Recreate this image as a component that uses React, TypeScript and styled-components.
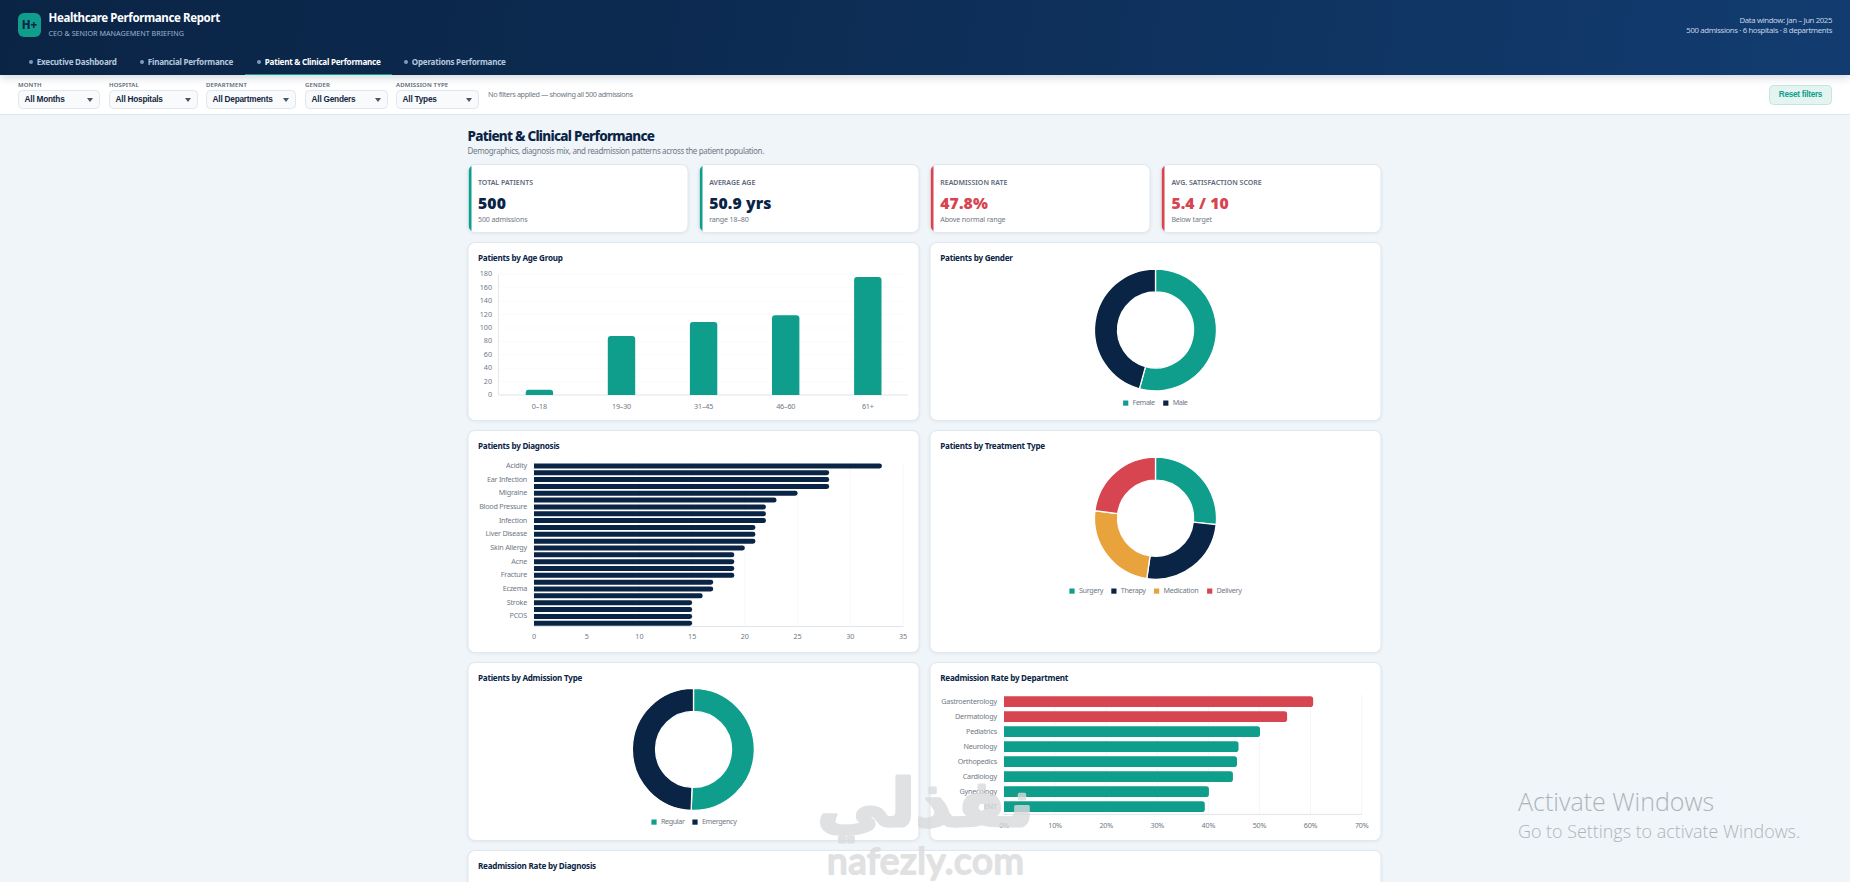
import React from 'react';
import styled, { createGlobalStyle } from 'styled-components';

const TEAL = '#109e8c';
const NAVY = '#0a2445';
const RED = '#d64550';
const AMBER = '#e8a33d';
const MUTED = '#6f7985';

const Global = createGlobalStyle`
  * { box-sizing: border-box; }
  html, body { margin: 0; height: 882px; overflow: hidden; }
  body { background: #f0f5f9; font-family: "Noto Sans", "Open Sans", sans-serif; color: ${NAVY}; }
`;

const Page = styled.div`
  position: relative;
  width: 1850px;
  height: 882px;
  overflow: hidden;
`;

const Header = styled.header`
  position: relative;
  z-index: 2;
  height: 75px;
  display: flex;
  flex-direction: column;
  justify-content: space-between;
  background: linear-gradient(100deg, #0a2445 0%, #0c2a50 35%, #123c70 100%);
  box-shadow: 0 2px 9px rgba(10, 36, 69, 0.2);
`;

const Brand = styled.div`
  display: flex;
  align-items: center;
  padding: 9px 18px 0;
`;

const Logo = styled.div`
  width: 23px;
  height: 24px;
  margin-top: 1px;
  border-radius: 6px;
  background: ${TEAL};
  color: ${NAVY};
  font: 800 11.5px/24px "Noto Sans", sans-serif;
  text-align: center;
`;

const BrandText = styled.div`
  margin-left: 7.5px;
  flex: 1;
`;

const BrandTitle = styled.div`
  color: #fff;
  font-size: 11.5px;
  font-weight: 700;
  line-height: 17px;
  letter-spacing: -0.38px;
`;

const BrandSub = styled.div`
  color: #9db4cf;
  font-size: 7.2px;
  line-height: 14px;
`;

const Window = styled.div`
  color: #c3d2e6;
  font-size: 7.8px;
  line-height: 10px;
  text-align: right;
  letter-spacing: -0.38px;
`;

const Tabs = styled.nav`
  display: flex;
  padding-left: 17px;
`;

const Tab = styled.div<{ $w: number; $on?: boolean }>`
  width: ${p => p.$w}px;
  height: 25px;
  padding: 0 0 1px 12px;
  display: flex;
  align-items: center;
  gap: 3.8px;
  font-size: 8.1px;
  font-weight: 700;
  letter-spacing: -0.25px;
  white-space: nowrap;
  color: ${p => (p.$on ? '#fff' : '#b3c7de')};
  border-bottom: 1.5px solid ${p => (p.$on ? TEAL : 'transparent')};
  &::before {
    content: '';
    width: 4px;
    height: 4px;
    flex: none;
    border-radius: 50%;
    background: #7f9bbb;
  }
`;

const Filters = styled.div`
  height: 40px;
  display: flex;
  align-items: flex-start;
  padding: 5.5px 18px 0;
  background: #fff;
  border-bottom: 1px solid #dde5ed;
`;

const Field = styled.div<{ $w: number; $gap: number }>`
  width: ${p => p.$w}px;
  margin-right: ${p => p.$gap}px;
`;

const FieldLabel = styled.div`
  height: 9.5px;
  font-size: 6px;
  line-height: 8.5px;
  font-weight: 600;
  letter-spacing: 0.15px;
  color: #5b6878;
  white-space: nowrap;
`;

const Select = styled.div`
  height: 19px;
  display: flex;
  align-items: center;
  justify-content: space-between;
  padding: 0 6px 0 5.6px;
  border: 1px solid #dfe6ee;
  border-radius: 4.5px;
  background: #f8fafc;
  font: 700 8.25px "Liberation Sans", sans-serif;
  letter-spacing: -0.22px;
  color: #14263f;
  white-space: nowrap;
  &::after {
    content: '';
    border: 3px solid transparent;
    border-top: 4.5px solid #4a5565;
    border-bottom: 0;
  }
`;

const FilterNote = styled.div`
  flex: 1;
  padding-top: 8px;
  font-size: 7.3px;
  line-height: 11px;
  letter-spacing: -0.4px;
  color: ${MUTED};
`;

const Reset = styled.div`
  width: 63px;
  height: 20px;
  margin-top: 4.5px;
  border: 1px solid #c5e5e0;
  border-radius: 4.5px;
  background: #e3f4f1;
  color: ${TEAL};
  font: 700 8.25px/17px "Liberation Sans", sans-serif;
  letter-spacing: -0.3px;
  text-align: center;
`;

const Main = styled.main`
  width: 914px;
  margin: 0 auto;
  padding-top: 12.8px;
  transform: translateX(-0.5px);
`;

const PageTitle = styled.h1`
  margin: 0;
  font-size: 13.5px;
  font-weight: 800;
  line-height: 16px;
  letter-spacing: -0.75px;
`;

const PageSub = styled.p`
  margin: 0.6px 0 7px;
  font-size: 8px;
  line-height: 13px;
  letter-spacing: -0.35px;
  color: ${MUTED};
`;

const Kpis = styled.div`
  display: grid;
  grid-template-columns: repeat(4, 1fr);
  gap: 10.5px;
  margin-bottom: 9.6px;
`;

const Kpi = styled.div<{ $c: string }>`
  position: relative;
  overflow: hidden;
  height: 68.4px;
  padding: 12.5px 0 0 9.5px;
  border: 1px solid #e0e7ee;
  border-radius: 7.5px;
  background: #fff;
  box-shadow: 0 1px 3px rgba(10, 36, 69, 0.06);
  &::before {
    content: '';
    position: absolute;
    left: 0;
    top: 0;
    bottom: 0;
    width: 2.5px;
    background: ${p => p.$c};
  }
`;

const KpiLabel = styled.div`
  font-size: 7px;
  font-weight: 600;
  line-height: 10px;
  color: #5b6878;
`;

const KpiValue = styled.div<{ $c: string }>`
  margin-top: 4px;
  font-size: 15.75px;
  font-weight: 900;
  line-height: 22px;
  letter-spacing: 0.1px;
  color: ${p => p.$c};
`;

const KpiNote = styled.div`
  font-size: 7.1px;
  line-height: 10px;
  letter-spacing: -0.15px;
  color: ${MUTED};
`;

const Grid = styled.div`
  display: grid;
  grid-template-columns: 1fr 1fr;
  grid-template-rows: 178.3px 222.3px 178.2px 178px;
  gap: 9.7px 10.5px;
`;

const Panel = styled.section<{ $wide?: boolean }>`
  ${p => p.$wide && 'grid-column: 1 / -1;'}
  min-width: 0;
  padding: 7.5px 9.5px 0;
  border: 1px solid #e0e7ee;
  border-radius: 7.5px;
  background: #fff;
  box-shadow: 0 1px 3px rgba(10, 36, 69, 0.06);
`;

const PanelTitle = styled.h2`
  margin: 0;
  height: 15px;
  font-size: 8.1px;
  font-weight: 700;
  line-height: 14.4px;
  letter-spacing: -0.24px;
  white-space: nowrap;
`;

const Chart = styled.svg`
  display: block;
  overflow: visible;
  text {
    font: 7.2px "Noto Sans", sans-serif;
    fill: ${MUTED};
  }
  text.name {
    letter-spacing: -0.22px;
  }
`;

const Overlay = styled.div`
  position: absolute;
  z-index: 5;
  pointer-events: none;
`;

const Activate = styled(Overlay)`
  left: 1518px;
  top: 785px;
  color: #adb4b9;
  font-family: "Open Sans", sans-serif;
  white-space: nowrap;
`;

const ActivateTitle = styled.div`
  font-size: 25px;
  line-height: 32px;
  font-weight: 350;
`;

const ActivateSub = styled.div`
  font-size: 17.9px;
  line-height: 28px;
  font-weight: 350;
`;

const Mark = styled(Overlay)`
  left: 790px;
  top: 750px;
`;

const r2 = (n: number) => Math.round(n * 100) / 100;

const roundedTop = (x: number, y: number, w: number, h: number, r: number) =>
  `M${x} ${y + h}V${y + r}Q${x} ${y} ${x + r} ${y}H${x + w - r}Q${x + w} ${y} ${x + w} ${y + r}V${y + h}Z`;
const roundedRight = (x: number, y: number, w: number, h: number, r: number) =>
  `M${x} ${y}H${x + w - r}Q${x + w} ${y} ${x + w} ${y + r}V${y + h - r}Q${x + w} ${y + h} ${x + w - r} ${y + h}H${x}Z`;

const AgeChart = () => {
  const bars: [string, number][] = [['0–18', 8], ['19–30', 88], ['31–45', 109], ['46–60', 119], ['61+', 176]];
  const base = 129;
  const k = 120.6 / 180;
  return (
    <Chart width={430} height={152}>
      {Array.from({ length: 10 }, (_, i) => i * 20).map(v => (
        <g key={v}>
          <line x1={20} x2={429.5} y1={base - v * k} y2={base - v * k} stroke={v ? '#fafbfd' : '#dfe5eb'} />
          <text x={13.5} y={base - v * k + 1.9} textAnchor="end">{v}</text>
        </g>
      ))}
      <line x1={20} x2={20} y1={8.4} y2={base} stroke="#e3e8ee" />
      {bars.map(([name, v], i) => {
        const cx = 60.9 + i * 82.1;
        return (
          <g key={name}>
            <path d={roundedTop(cx - 13.7, base - v * k, 27.4, v * k, 3)} fill={TEAL} />
            <text className="name" x={cx} y={142.9} textAnchor="middle">{name}</text>
          </g>
        );
      })}
    </Chart>
  );
};

type Slice = { name: string; color: string; to: number; x: number; w: number };

const Donut = ({ cy, slices, legendY }: { cy: number; slices: Slice[]; legendY: number }) => {
  const cx = 215;
  const R = 61;
  const r = 38;
  const at = (deg: number, rad: number) => {
    const a = (deg * Math.PI) / 180;
    return `${r2(cx + rad * Math.sin(a))} ${r2(cy - rad * Math.cos(a))}`;
  };
  return (
    <Chart width={430} height={152}>
      {slices.map((s, i) => {
        const from = i ? slices[i - 1].to : 0;
        const big = s.to - from > 180 ? 1 : 0;
        return (
          <g key={s.name}>
            <path
              d={`M${at(from, R)}A${R} ${R} 0 ${big} 1 ${at(s.to, R)}L${at(s.to, r)}A${r} ${r} 0 ${big} 0 ${at(from, r)}Z`}
              fill={s.color}
              stroke="#fff"
              strokeWidth={1.3}
            />
            <rect x={s.x} y={legendY - 2.5} width={5.2} height={5.2} fill={s.color} />
            <text x={s.x + 9.5} y={legendY + 2.1} textLength={s.w}>{s.name}</text>
          </g>
        );
      })}
    </Chart>
  );
};

const DiagnosisChart = () => {
  const values = [33, 28, 28, 28, 25, 23, 22, 22, 22, 21, 21, 21, 20, 19, 19, 19, 19, 17, 17, 16, 15, 15, 15, 15];
  const names = ['Acidity', 'Ear Infection', 'Migraine', 'Blood Pressure', 'Infection', 'Liver Disease', 'Skin Allergy', 'Acne', 'Fracture', 'Eczema', 'Stroke', 'PCOS'];
  const x0 = 55.5;
  const k = 369 / 35;
  return (
    <Chart width={430} height={196}>
      {[0, 5, 10, 15, 20, 25, 30, 35].map(v => (
        <g key={v}>
          <line x1={x0 + v * k} x2={x0 + v * k} y1={8.5} y2={172.6} stroke="#f7f8fa" />
          <text x={x0 + v * k} y={184.6} textAnchor="middle">{v}</text>
        </g>
      ))}
      <line x1={x0} x2={x0 + 369.5} y1={172.6} y2={172.6} stroke="#dfe5eb" />
      {values.map((v, i) => (
        <path key={i} d={roundedRight(x0, r2(9.4 + i * 6.84), v * k, 5, 2.4)} fill={NAVY} />
      ))}
      {names.map((n, i) => (
        <text className="name" key={n} x={48.5} y={14 + i * 13.65} textAnchor="end">{n}</text>
      ))}
    </Chart>
  );
};

const DepartmentChart = () => {
  const rows: [string, number][] = [
    ['Gastroenterology', 60.5], ['Dermatology', 55.4], ['Pediatrics', 50.1], ['Neurology', 45.9],
    ['Orthopedics', 45.6], ['Cardiology', 44.8], ['Gynecology', 40.1], ['ENT', 39.3],
  ];
  const x0 = 63.5;
  const k = 357.7 / 70;
  return (
    <Chart width={430} height={152}>
      {[0, 10, 20, 30, 40, 50, 60, 70].map(v => (
        <g key={v}>
          <line x1={x0 + v * k} x2={x0 + v * k} y1={8.5} y2={128.4} stroke="#f4f6f9" />
          <text className="name" x={x0 + v * k} y={141.8} textAnchor="middle">{v}%</text>
        </g>
      ))}
      <line x1={x0} x2={x0 + 358} y1={128.4} y2={128.4} stroke="#dfe5eb" />
      {rows.map(([n, v], i) => (
        <g key={n}>
          <path d={roundedRight(x0, 10.3 + i * 15, v * k, 10.7, 2.8)} fill={i < 2 ? RED : TEAL} />
          <text className="name" x={56.4} y={17.8 + i * 15} textAnchor="end">{n}</text>
        </g>
      ))}
    </Chart>
  );
};

const tabs: { name: string; w: number; on?: boolean }[] = [
  { name: 'Executive Dashboard', w: 111 },
  { name: 'Financial Performance', w: 117 },
  { name: 'Patient & Clinical Performance', w: 147, on: true },
  { name: 'Operations Performance', w: 126 },
];

const fields = [
  { label: 'MONTH', value: 'All Months', w: 82, gap: 9 },
  { label: 'HOSPITAL', value: 'All Hospitals', w: 89, gap: 8 },
  { label: 'DEPARTMENT', value: 'All Departments', w: 90, gap: 9 },
  { label: 'GENDER', value: 'All Genders', w: 83, gap: 8 },
  { label: 'ADMISSION TYPE', value: 'All Types', w: 83, gap: 9 },
];

const kpis = [
  { label: 'TOTAL PATIENTS', value: '500', note: '500 admissions', bad: false },
  { label: 'AVERAGE AGE', value: '50.9 yrs', note: 'range 18–80', bad: false },
  { label: 'READMISSION RATE', value: '47.8%', note: 'Above normal range', bad: true },
  { label: 'AVG. SATISFACTION SCORE', value: '5.4 / 10', note: 'Below target', bad: true },
];

export default function App() {
  return (
    <Page>
      <Global />
      <Header>
        <Brand>
          <Logo>H+</Logo>
          <BrandText>
            <BrandTitle>Healthcare Performance Report</BrandTitle>
            <BrandSub>CEO &amp; SENIOR MANAGEMENT BRIEFING</BrandSub>
          </BrandText>
          <Window>
            <div>Data window: Jan – Jun 2025</div>
            <div>500 admissions · 6 hospitals · 8 departments</div>
          </Window>
        </Brand>
        <Tabs>
          {tabs.map(t => (
            <Tab key={t.name} $w={t.w} $on={t.on}>{t.name}</Tab>
          ))}
        </Tabs>
      </Header>
      <Filters>
        {fields.map(f => (
          <Field key={f.label} $w={f.w} $gap={f.gap}>
            <FieldLabel>{f.label}</FieldLabel>
            <Select>{f.value}</Select>
          </Field>
        ))}
        <FilterNote>No filters applied — showing all 500 admissions</FilterNote>
        <Reset>Reset filters</Reset>
      </Filters>
      <Main>
        <PageTitle>Patient &amp; Clinical Performance</PageTitle>
        <PageSub>Demographics, diagnosis mix, and readmission patterns across the patient population.</PageSub>
        <Kpis>
          {kpis.map(k => (
            <Kpi key={k.label} $c={k.bad ? RED : TEAL}>
              <KpiLabel>{k.label}</KpiLabel>
              <KpiValue $c={k.bad ? RED : NAVY}>{k.value}</KpiValue>
              <KpiNote>{k.note}</KpiNote>
            </Kpi>
          ))}
        </Kpis>
        <Grid>
          <Panel>
            <PanelTitle>Patients by Age Group</PanelTitle>
            <AgeChart />
          </Panel>
          <Panel>
            <PanelTitle>Patients by Gender</PanelTitle>
            <Donut
              cy={64}
              legendY={137}
              slices={[
                { name: 'Female', color: TEAL, to: 195.3, x: 182.6, w: 22.5 },
                { name: 'Male', color: NAVY, to: 360, x: 222.7, w: 15.2 },
              ]}
            />
          </Panel>
          <Panel>
            <PanelTitle>Patients by Diagnosis</PanelTitle>
            <DiagnosisChart />
          </Panel>
          <Panel>
            <PanelTitle>Patients by Treatment Type</PanelTitle>
            <Donut
              cy={64.2}
              legendY={137}
              slices={[
                { name: 'Surgery', color: TEAL, to: 96, x: 128.9, w: 24.6 },
                { name: 'Therapy', color: NAVY, to: 188.2, x: 170.8, w: 25.2 },
                { name: 'Medication', color: AMBER, to: 277, x: 213.5, w: 35.2 },
                { name: 'Delivery', color: RED, to: 360, x: 266.6, w: 25.2 },
              ]}
            />
          </Panel>
          <Panel>
            <PanelTitle>Patients by Admission Type</PanelTitle>
            <Donut
              cy={63.4}
              legendY={136}
              slices={[
                { name: 'Regular', color: TEAL, to: 182.2, x: 172.9, w: 24 },
                { name: 'Emergency', color: NAVY, to: 360, x: 213.9, w: 35 },
              ]}
            />
          </Panel>
          <Panel>
            <PanelTitle>Readmission Rate by Department</PanelTitle>
            <DepartmentChart />
          </Panel>
          <Panel $wide>
            <PanelTitle>Readmission Rate by Diagnosis</PanelTitle>
          </Panel>
        </Grid>
      </Main>
      <Activate>
        <ActivateTitle>Activate Windows</ActivateTitle>
        <ActivateSub>Go to Settings to activate Windows.</ActivateSub>
      </Activate>
      <Mark>
        <svg width={270} height={132} overflow="visible" fill="#d9dadb" stroke="#d9dadb" strokeLinejoin="round" opacity={0.8}>
          <text
            transform="translate(135.5 76) scale(1.075 1)"
            textAnchor="middle"
            direction="rtl"
            fontFamily="DejaVu Sans"
            fontWeight={700}
            fontSize={66}
            strokeWidth={3}
          >
            نفذلي
          </text>
          <text x={37} y={124} fontFamily="Lato, sans-serif" fontWeight={400} fontSize={37} strokeWidth={2} textLength={197}>
            nafezly.com
          </text>
        </svg>
      </Mark>
    </Page>
  );
}
